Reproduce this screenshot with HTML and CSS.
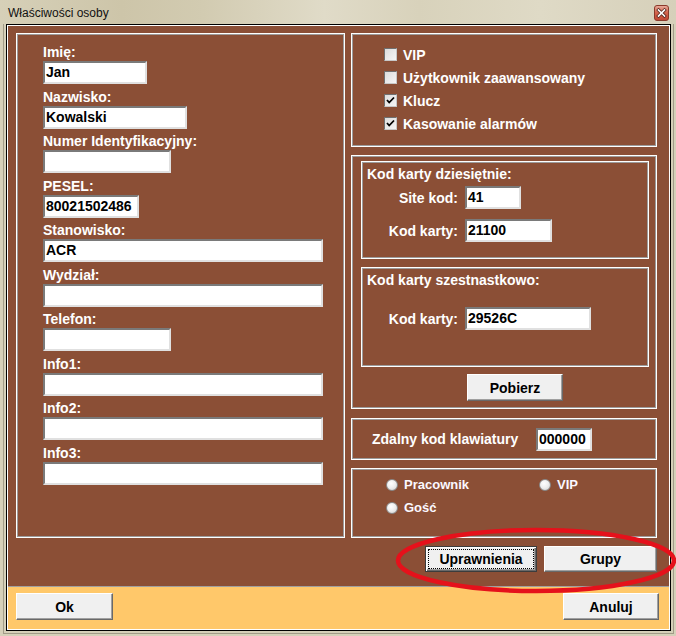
FILE: index.html
```html
<!DOCTYPE html>
<html lang="pl">
<head>
<meta charset="utf-8">
<title>Właściwości osoby</title>
<link rel="stylesheet" href="styles.css">
</head>
<body>
<div class="window">
  <div class="titlebar">
    <span class="title">Właściwości osoby</span>
    <span class="close">
      <svg width="15" height="16" viewBox="0 0 15 16">
        <defs>
          <linearGradient id="cg" x1="0" y1="0" x2="0" y2="1">
            <stop offset="0" stop-color="#eab0a0"/>
            <stop offset="0.45" stop-color="#d4664f"/>
            <stop offset="1" stop-color="#bf4430"/>
          </linearGradient>
        </defs>
        <rect x="0.5" y="0.5" width="14" height="15" rx="2.5" fill="url(#cg)" stroke="#8a3a2b"/>
        <path d="M4.5 5 L10.5 11 M10.5 5 L4.5 11" stroke="#5a2a20" stroke-width="3.2" stroke-linecap="square"/>
        <path d="M4.5 5 L10.5 11 M10.5 5 L4.5 11" stroke="#ffffff" stroke-width="1.6" stroke-linecap="square"/>
      </svg>
    </span>
  </div>
  <div class="frame">
    <div class="client">
      <div class="client-in">
        <div class="main">
          <div class="group person">
            <div class="row"><div class="lbl">Imię:</div><div class="edit w104">Jan</div></div>
            <div class="row"><div class="lbl">Nazwisko:</div><div class="edit w144">Kowalski</div></div>
            <div class="row"><div class="lbl">Numer Identyfikacyjny:</div><div class="edit w128"></div></div>
            <div class="row"><div class="lbl">PESEL:</div><div class="edit w96">80021502486</div></div>
            <div class="row"><div class="lbl">Stanowisko:</div><div class="edit w280">ACR</div></div>
            <div class="row"><div class="lbl">Wydział:</div><div class="edit w280"></div></div>
            <div class="row"><div class="lbl">Telefon:</div><div class="edit w128"></div></div>
            <div class="row"><div class="lbl">Info1:</div><div class="edit w280"></div></div>
            <div class="row"><div class="lbl">Info2:</div><div class="edit w280"></div></div>
            <div class="row"><div class="lbl">Info3:</div><div class="edit w280"></div></div>
          </div>
          <div class="rightcol">
            <div class="group flags">
              <div class="chk"><span class="cb"></span><span>VIP</span></div>
              <div class="chk"><span class="cb"></span><span>Użytkownik zaawansowany</span></div>
              <div class="chk"><span class="cb checked"><svg width="11" height="11" viewBox="0 0 11 11"><path d="M2 5 L4.2 7.5 L9 2.5" fill="none" stroke="#000" stroke-width="1.8"/></svg></span><span>Klucz</span></div>
              <div class="chk"><span class="cb checked"><svg width="11" height="11" viewBox="0 0 11 11"><path d="M2 5 L4.2 7.5 L9 2.5" fill="none" stroke="#000" stroke-width="1.8"/></svg></span><span>Kasowanie alarmów</span></div>
            </div>
            <div class="group card">
              <div class="group sub dec">
                <div class="subtitle">Kod karty dziesiętnie:</div>
                <div class="pair"><span class="plbl">Site kod:</span><div class="edit w56">41</div></div>
                <div class="pair"><span class="plbl">Kod karty:</span><div class="edit w87">21100</div></div>
              </div>
              <div class="group sub hex">
                <div class="subtitle">Kod karty szestnastkowo:</div>
                <div class="pair"><span class="plbl">Kod karty:</span><div class="edit w126">29526C</div></div>
              </div>
              <button class="btn pobierz">Pobierz</button>
            </div>
            <div class="group remote">
              <span class="rtext">Zdalny kod klawiatury</span>
              <div class="edit w56">000000</div>
            </div>
            <div class="group types">
              <div class="rad"><span class="rb"></span><span>Pracownik</span></div>
              <div class="rad"><span class="rb"></span><span>VIP</span></div>
              <div class="rad"><span class="rb"></span><span>Gość</span></div>
            </div>
            <div class="btnrow">
              <button class="btn default perm"><span class="focus">Uprawnienia</span></button>
              <button class="btn groups">Grupy</button>
            </div>
          </div>
        </div>
        <div class="footer">
          <button class="btn ok">Ok</button>
          <button class="btn cancel">Anuluj</button>
        </div>
      </div>
    </div>
  </div>
  <svg class="mark" width="676" height="636" viewBox="0 0 676 636">
    <ellipse cx="536" cy="560.5" rx="138" ry="30.5" fill="none" stroke="#e5111b" stroke-width="4.5"/>
  </svg>
</div>
</body>
</html>
```

FILE: styles.css
```css
* { box-sizing: border-box; }

body {
  margin: 0;
  background: #d6d0b9;
  font-family: "Liberation Sans", Arial, sans-serif;
}

.window {
  position: relative;
  width: 676px;
  height: 636px;
  background: #d6d0b9;
  overflow: hidden;
  display: flex;
  flex-direction: column;
}

.titlebar {
  height: 24px;
  flex: none;
  display: flex;
  align-items: flex-start;
  justify-content: space-between;
  padding: 0 7px 0 8px;
  background: linear-gradient(90deg, #d6d0b8 0%, #cdc5a9 18%, #d2cbb1 30%, #e0dbc8 48%, #d8d2bb 62%, #dfdac6 80%, #d6d0ba 100%);
}

.title {
  font-size: 12px;
  line-height: 14px;
  margin-top: 6px;
  color: #111;
}

.close {
  display: block;
  width: 15px;
  height: 16px;
  margin-top: 5px;
}
.close svg { display: block; }

.frame {
  margin: 0 2px 2px 3px;
  border: 1px solid #a29c88;
  border-top: none;
  padding: 0 2px 2px 2px;
  height: 610px;
}

.client {
  border: 1px solid #000;
  height: 607px;
}

.client-in {
  border: 1px solid #fff;
  height: 605px;
  display: flex;
  flex-direction: column;
}

.main {
  height: 560px;
  background: #8b4f36;
  display: flex;
  align-items: flex-start;
  gap: 6px;
  padding: 7px 0 0 8px;
}

.group {
  border: 1px solid #fff;
  box-shadow: inset 0 0 0 1px #9c9c9c;
}

.person {
  width: 329px;
  height: 505px;
  padding: 10px 0 0 26px;
}

.row + .row { margin-top: 4.56px; }

.lbl {
  font-size: 14px;
  font-weight: bold;
  line-height: 16px;
  color: #fff;
  margin-bottom: 1px;
  white-space: nowrap;
}

.edit {
  height: 23px;
  border: 2px solid;
  border-color: #7a7a7a #e0e0e0 #e0e0e0 #7a7a7a;
  background: #fff;
  font-size: 14px;
  font-weight: bold;
  line-height: 19px;
  padding: 0 1px;
  color: #000;
  white-space: nowrap;
  overflow: hidden;
  flex: none;
}

.w56 { width: 56px; }
.w87 { width: 87px; }
.w96 { width: 96px; }
.w104 { width: 104px; }
.w126 { width: 126px; }
.w128 { width: 128px; }
.w144 { width: 144px; }
.w280 { width: 280px; }

.rightcol {
  width: 306px;
  display: flex;
  flex-direction: column;
}

.flags {
  height: 114px;
  padding: 9px 0 0 32px;
}

.chk {
  display: flex;
  align-items: center;
  gap: 6px;
  height: 23px;
  font-size: 14px;
  font-weight: bold;
  color: #fff;
  white-space: nowrap;
}

.cb {
  width: 13px;
  height: 13px;
  flex: none;
  display: flex;
  align-items: center;
  justify-content: center;
  border: 1px solid;
  border-color: #707070 #c8c8c8 #c8c8c8 #707070;
  background: linear-gradient(135deg, #dcdcdc, #f6f6f6);
}
.cb svg { display: block; }

.card {
  height: 254px;
  margin-top: 8px;
  padding: 5px 0 0 9px;
}

.sub { width: 288px; }

.dec {
  height: 98px;
  padding: 4px 0 0 5px;
}

.hex {
  height: 100px;
  margin-top: 8px;
  padding: 4px 0 0 5px;
}

.subtitle {
  font-size: 14px;
  font-weight: bold;
  line-height: 16px;
  color: #fff;
  white-space: nowrap;
}

.pair {
  display: flex;
  align-items: center;
  gap: 7px;
}
.dec .pair { margin-top: 4px; }
.dec .pair + .pair { margin-top: 10px; }
.hex .pair { margin-top: 19px; }

.plbl {
  width: 91px;
  text-align: right;
  font-size: 14px;
  font-weight: bold;
  color: #fff;
  white-space: nowrap;
}

.btn {
  display: flex;
  align-items: center;
  justify-content: center;
  height: 27px;
  margin: 0;
  padding: 0;
  background: #f0f0f0;
  border: 1px solid;
  border-color: #ffffff #696969 #696969 #ffffff;
  box-shadow: inset -1px -1px 0 #a0a0a0;
  font-family: "Liberation Sans", Arial, sans-serif;
  font-size: 14px;
  font-weight: bold;
  color: #000;
}

.pobierz {
  width: 96px;
  margin: 7px 0 0 106px;
}

.remote {
  height: 42px;
  margin-top: 9px;
  display: flex;
  align-items: center;
  padding-left: 20px;
}

.rtext {
  width: 164px;
  flex: none;
  font-size: 14px;
  font-weight: bold;
  color: #fff;
  white-space: nowrap;
}

.types {
  height: 70px;
  margin-top: 8px;
  padding: 4px 0 0 34px;
  display: grid;
  grid-template-columns: 153px auto;
  grid-auto-rows: 23px;
  align-content: start;
}

.rad {
  display: flex;
  align-items: center;
  gap: 6px;
  font-size: 13px;
  font-weight: bold;
  color: #fbf8ff;
  white-space: nowrap;
}

.rb {
  width: 12px;
  height: 12px;
  flex: none;
  border-radius: 50%;
  border: 1px solid #8a8a8a;
  background: radial-gradient(circle at 40% 35%, #ffffff 0%, #f0f0f0 45%, #cfcfcf 100%);
}

.btnrow {
  margin-top: 8px;
  display: flex;
  justify-content: flex-end;
  gap: 7px;
}
.btnrow .btn { height: 26px; }

.perm { width: 112px; }
.groups { width: 113px; }

.default {
  border-color: #3c3c3c;
  box-shadow: inset 1px 1px 0 #fff, inset -1px -1px 0 #696969, inset -2px -2px 0 #a0a0a0;
  align-items: flex-start;
  justify-content: flex-start;
  padding: 2px 0 0 2px;
}

.focus {
  width: 106px;
  height: 20px;
  border: 1px dotted #000;
  display: flex;
  align-items: center;
  justify-content: center;
}

.footer {
  height: 43px;
  border-top: 1px solid #a0a0a0;
  background: #ffc86a;
  display: flex;
  justify-content: space-between;
  align-items: flex-start;
  padding: 6px 10px 0 8px;
}

.ok { width: 97px; }
.cancel { width: 96px; }

.mark {
  position: absolute;
  left: 0;
  top: 0;
  pointer-events: none;
}
```
